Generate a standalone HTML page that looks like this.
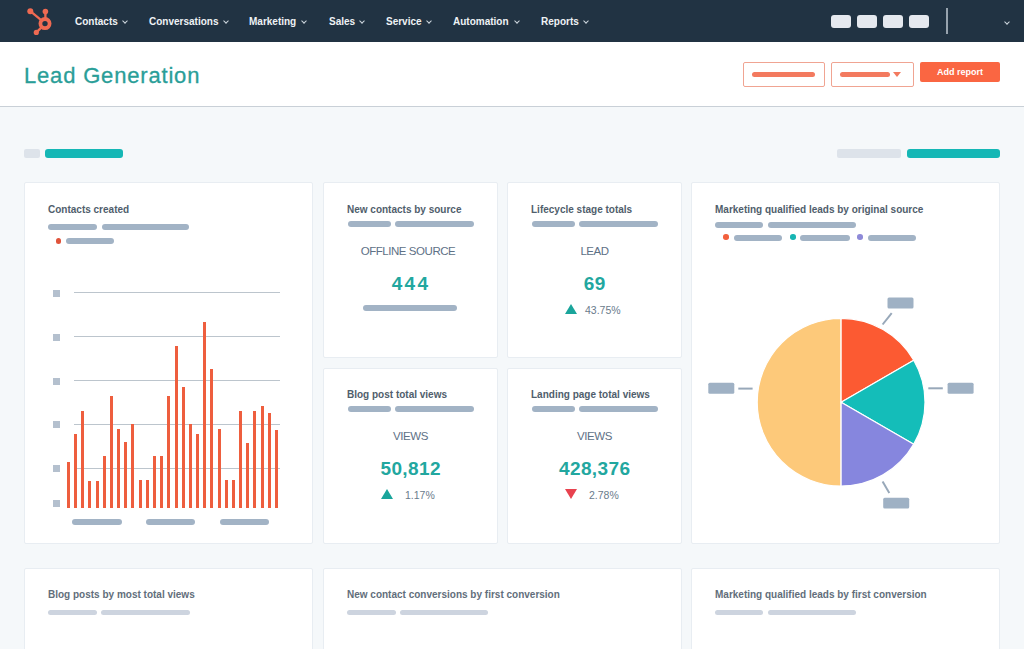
<!DOCTYPE html>
<html><head><meta charset="utf-8">
<style>
*{margin:0;padding:0;box-sizing:border-box}
html,body{width:1024px;height:649px;overflow:hidden;background:#f5f8fa;font-family:"Liberation Sans",sans-serif;position:relative}
.a{position:absolute}
#nav{left:0;top:0;width:1024px;height:42px;background:#213343}
.ni{position:absolute;top:15.7px;font-size:10px;font-weight:bold;color:#eef2f5;line-height:12px;white-space:nowrap}
.chev{position:absolute;width:4px;height:4px;border-right:1.2px solid #cfd8e0;border-bottom:1.2px solid #cfd8e0;transform:rotate(45deg)}
.sq{position:absolute;top:15px;width:19.5px;height:12.5px;background:#e5e9ef;border-radius:3px}
#hdr{left:0;top:42px;width:1024px;height:65px;background:#fff;border-bottom:1px solid #c9d0d7}
#title{left:24px;top:63px;font-size:22px;color:#2a9e98;letter-spacing:0.82px;-webkit-text-stroke:0.3px #2a9e98;line-height:26px;white-space:nowrap}
.btno{position:absolute;top:62px;height:24.5px;border:1.6px solid #f0a492;border-radius:2px;background:#fff}
.bp{position:absolute;height:5px;background:#f37a5f;border-radius:3px}
.card{position:absolute;background:#fff;border:1px solid #e8edf2;border-radius:2px}
.ct{position:absolute;font-size:10px;font-weight:bold;color:#505e6c;line-height:13.4px;white-space:nowrap}
.pl{position:absolute;height:5.5px;background:#a2b3c5;border-radius:3px}
.lab{position:absolute;font-size:11.5px;letter-spacing:-0.45px;color:#5e7186;line-height:14px;white-space:nowrap;text-align:center}
.num{position:absolute;font-size:19px;letter-spacing:0.4px;text-indent:0.4px;font-weight:bold;color:#22a79f;line-height:22px;white-space:nowrap;text-align:center}
.pct{position:absolute;font-size:10.5px;color:#6a7b8c;line-height:12px;white-space:nowrap}
.grid{position:absolute;left:74px;width:206px;height:1px;background:#bcc5cd}
.ys{position:absolute;left:53px;width:7px;height:7px;background:#b4c0ce}
.bar{position:absolute;width:3px;background:#ee5e3e;bottom:141px}
.r3{color:#626e7b}
.r3p{background:#cdd4df}
</style></head><body>
<div id="nav" class="a">
  <svg class="a" style="left:26px;top:6px" width="34" height="30" viewBox="26 6 34 30">
    <g fill="none" stroke="#ef6a52">
      <circle cx="45" cy="23.6" r="4.6" stroke-width="3.8"/>
      <line x1="30.3" y1="11.2" x2="41.5" y2="20.3" stroke-width="2.3"/>
      <line x1="45.4" y1="12" x2="45.4" y2="19" stroke-width="2.3"/>
      <line x1="36.3" y1="32.3" x2="41.5" y2="27.3" stroke-width="2.3"/>
    </g>
    <g fill="#ef6a52">
      <circle cx="30.3" cy="11.2" r="3"/>
      <circle cx="45.4" cy="11.6" r="2.8"/>
      <circle cx="36.3" cy="32.4" r="2.6"/>
    </g>
  </svg>
  <div class="ni" style="left:75px">Contacts</div><div class="chev" style="left:123px;top:19.3px"></div>
  <div class="ni" style="left:149px">Conversations</div><div class="chev" style="left:223.5px;top:19.3px"></div>
  <div class="ni" style="left:249px">Marketing</div><div class="chev" style="left:302px;top:19.3px"></div>
  <div class="ni" style="left:329px">Sales</div><div class="chev" style="left:360px;top:19.3px"></div>
  <div class="ni" style="left:386px">Service</div><div class="chev" style="left:427px;top:19.3px"></div>
  <div class="ni" style="left:453px">Automation</div><div class="chev" style="left:515px;top:19.3px"></div>
  <div class="ni" style="left:541px">Reports</div><div class="chev" style="left:584px;top:19.3px"></div>
  <div class="sq" style="left:831px"></div>
  <div class="sq" style="left:857px"></div>
  <div class="sq" style="left:883px"></div>
  <div class="sq" style="left:909px"></div>
  <div class="a" style="left:946px;top:8px;width:1.5px;height:26px;background:#97a3ae"></div>
  <div class="chev" style="left:1004.5px;top:19.6px"></div>
</div>
<div id="hdr" class="a"></div>
<div id="title" class="a">Lead Generation</div>
<div class="btno" style="left:743px;width:82px"><div class="bp" style="left:8px;top:8.6px;width:63px"></div></div>
<div class="btno" style="left:831px;width:83px"><div class="bp" style="left:8px;top:8.6px;width:50px"></div>
  <div class="a" style="left:60.5px;top:8.6px;width:0;height:0;border-left:4.5px solid transparent;border-right:4.5px solid transparent;border-top:5px solid #f37a5f"></div></div>
<div class="a" style="left:920px;top:62px;width:80px;height:20px;background:#fa6642;border-radius:2px;color:#fff;font-size:9px;font-weight:bold;line-height:21px;text-align:center">Add report</div>

<!-- pill row -->
<div class="a" style="left:24px;top:149px;width:16px;height:9px;background:#dde3ea;border-radius:2px"></div>
<div class="a" style="left:45px;top:149px;width:78px;height:9px;background:#15b7b5;border-radius:3px"></div>
<div class="a" style="left:837px;top:149px;width:64px;height:9px;background:#dde3ea;border-radius:2px"></div>
<div class="a" style="left:907px;top:149px;width:93px;height:9px;background:#15b7b5;border-radius:3px"></div>

<!-- card 1 -->
<div class="card" style="left:24px;top:182px;width:289px;height:362px"></div>
<div class="ct" style="left:48px;top:203px">Contacts created</div>
<div class="pl" style="left:48px;top:224px;width:49px"></div>
<div class="pl" style="left:102px;top:224px;width:87px"></div>
<div class="a" style="left:55.5px;top:238px;width:5.5px;height:5.5px;border-radius:50%;background:#e0533a"></div>
<div class="pl" style="left:66px;top:238px;width:48px"></div>
<div class="grid" style="top:292px"></div>
<div class="grid" style="top:336px"></div>
<div class="grid" style="top:380px"></div>
<div class="grid" style="top:424px"></div>
<div class="grid" style="top:468px"></div>
<div class="ys" style="top:290px"></div>
<div class="ys" style="top:334px"></div>
<div class="ys" style="top:378px"></div>
<div class="ys" style="top:421px"></div>
<div class="ys" style="top:465px"></div>
<div class="ys" style="top:500px"></div>
<div class="a" style="left:66.80px;top:461.50px;width:3px;height:46.20px;background:#ee5e3e"></div>
<div class="a" style="left:73.98px;top:433.90px;width:3px;height:73.80px;background:#ee5e3e"></div>
<div class="a" style="left:81.16px;top:410.50px;width:3px;height:97.20px;background:#ee5e3e"></div>
<div class="a" style="left:88.34px;top:480.50px;width:3px;height:27.20px;background:#ee5e3e"></div>
<div class="a" style="left:95.52px;top:480.50px;width:3px;height:27.20px;background:#ee5e3e"></div>
<div class="a" style="left:102.70px;top:456.30px;width:3px;height:51.40px;background:#ee5e3e"></div>
<div class="a" style="left:109.88px;top:396.00px;width:3px;height:111.70px;background:#ee5e3e"></div>
<div class="a" style="left:117.06px;top:429.00px;width:3px;height:78.70px;background:#ee5e3e"></div>
<div class="a" style="left:124.24px;top:442.30px;width:3px;height:65.40px;background:#ee5e3e"></div>
<div class="a" style="left:131.42px;top:424.00px;width:3px;height:83.70px;background:#ee5e3e"></div>
<div class="a" style="left:138.60px;top:480.00px;width:3px;height:27.70px;background:#ee5e3e"></div>
<div class="a" style="left:145.78px;top:480.00px;width:3px;height:27.70px;background:#ee5e3e"></div>
<div class="a" style="left:152.96px;top:456.30px;width:3px;height:51.40px;background:#ee5e3e"></div>
<div class="a" style="left:160.14px;top:456.30px;width:3px;height:51.40px;background:#ee5e3e"></div>
<div class="a" style="left:167.32px;top:396.00px;width:3px;height:111.70px;background:#ee5e3e"></div>
<div class="a" style="left:174.50px;top:345.60px;width:3px;height:162.10px;background:#ee5e3e"></div>
<div class="a" style="left:181.68px;top:386.50px;width:3px;height:121.20px;background:#ee5e3e"></div>
<div class="a" style="left:188.86px;top:424.20px;width:3px;height:83.50px;background:#ee5e3e"></div>
<div class="a" style="left:196.04px;top:433.70px;width:3px;height:74.00px;background:#ee5e3e"></div>
<div class="a" style="left:203.22px;top:322.20px;width:3px;height:185.50px;background:#ee5e3e"></div>
<div class="a" style="left:210.40px;top:368.50px;width:3px;height:139.20px;background:#ee5e3e"></div>
<div class="a" style="left:217.58px;top:429.00px;width:3px;height:78.70px;background:#ee5e3e"></div>
<div class="a" style="left:224.76px;top:480.00px;width:3px;height:27.70px;background:#ee5e3e"></div>
<div class="a" style="left:231.94px;top:480.00px;width:3px;height:27.70px;background:#ee5e3e"></div>
<div class="a" style="left:239.12px;top:410.80px;width:3px;height:96.90px;background:#ee5e3e"></div>
<div class="a" style="left:246.30px;top:442.50px;width:3px;height:65.20px;background:#ee5e3e"></div>
<div class="a" style="left:253.48px;top:411.00px;width:3px;height:96.70px;background:#ee5e3e"></div>
<div class="a" style="left:260.66px;top:405.80px;width:3px;height:101.90px;background:#ee5e3e"></div>
<div class="a" style="left:267.84px;top:413.00px;width:3px;height:94.70px;background:#ee5e3e"></div>
<div class="a" style="left:275.02px;top:430.00px;width:3px;height:77.70px;background:#ee5e3e"></div>

<div class="pl" style="left:72px;top:519px;width:50px"></div>
<div class="pl" style="left:146px;top:519px;width:49px"></div>
<div class="pl" style="left:220px;top:519px;width:49px"></div>

<!-- card 2 -->
<div class="card" style="left:323px;top:182px;width:175px;height:176px"></div>
<div class="ct" style="left:347px;top:203px">New contacts by source</div>
<div class="pl" style="left:348px;top:221px;width:43px"></div>
<div class="pl" style="left:395px;top:221px;width:79px"></div>
<div class="lab" style="left:320.5px;width:175px;top:244px">OFFLINE SOURCE</div>
<div class="num" style="left:323px;width:175px;top:273.4px;letter-spacing:2.2px;text-indent:1px">444</div>
<div class="pl" style="left:363px;top:305px;width:94px"></div>

<!-- card 3 -->
<div class="card" style="left:507px;top:182px;width:175px;height:176px"></div>
<div class="ct" style="left:531px;top:203px">Lifecycle stage totals</div>
<div class="pl" style="left:532px;top:221px;width:43px"></div>
<div class="pl" style="left:579px;top:221px;width:79px"></div>
<div class="lab" style="left:507px;width:175px;top:244px">LEAD</div>
<div class="num" style="left:507px;width:175px;top:273.4px">69</div>
<div class="a" style="left:564.8px;top:304.3px;width:0;height:0;border-left:6.8px solid transparent;border-right:6.8px solid transparent;border-bottom:10.3px solid #1aa59b"></div>
<div class="pct" style="left:585px;top:304px">43.75%</div>

<!-- card 2b -->
<div class="card" style="left:323px;top:368px;width:175px;height:176px"></div>
<div class="ct" style="left:347px;top:388px">Blog post total views</div>
<div class="pl" style="left:348px;top:406px;width:43px"></div>
<div class="pl" style="left:395px;top:406px;width:79px"></div>
<div class="lab" style="left:323px;width:175px;top:429px">VIEWS</div>
<div class="num" style="left:323px;width:175px;top:458.4px">50,812</div>
<div class="a" style="left:380.8px;top:489.4px;width:0;height:0;border-left:6.8px solid transparent;border-right:6.8px solid transparent;border-bottom:10.3px solid #1aa59b"></div>
<div class="pct" style="left:405px;top:489px">1.17%</div>

<!-- card 3b -->
<div class="card" style="left:507px;top:368px;width:175px;height:176px"></div>
<div class="ct" style="left:531px;top:388px">Landing page total views</div>
<div class="pl" style="left:532px;top:406px;width:43px"></div>
<div class="pl" style="left:579px;top:406px;width:79px"></div>
<div class="lab" style="left:507px;width:175px;top:429px">VIEWS</div>
<div class="num" style="left:507px;width:175px;top:458.4px">428,376</div>
<div class="a" style="left:564.8px;top:489.2px;width:0;height:0;border-left:6.8px solid transparent;border-right:6.8px solid transparent;border-top:10.2px solid #e8424f"></div>
<div class="pct" style="left:589px;top:489px">2.78%</div>

<!-- card 4 -->
<div class="card" style="left:691px;top:182px;width:309px;height:362px"></div>
<div class="ct" style="left:715px;top:203px">Marketing qualified leads by original source</div>
<div class="pl" style="left:715px;top:222px;width:48px"></div>
<div class="pl" style="left:768px;top:222px;width:88px"></div>
<div class="a" style="left:723.2px;top:234.4px;width:5.6px;height:5.6px;border-radius:50%;background:#f2603d"></div>
<div class="pl" style="left:734px;top:235px;width:48px"></div>
<div class="a" style="left:790.2px;top:234.4px;width:5.6px;height:5.6px;border-radius:50%;background:#17b5b3"></div>
<div class="pl" style="left:800px;top:235px;width:50px"></div>
<div class="a" style="left:857.2px;top:234.4px;width:5.6px;height:5.6px;border-radius:50%;background:#8e8ad8"></div>
<div class="pl" style="left:868px;top:235px;width:48px"></div>
<svg class="a" style="left:691px;top:182px" width="310" height="362" viewBox="691 182 310 362">
  <g stroke="#fff" stroke-width="1.2" stroke-linejoin="round">
    <path d="M841.10 402.20 L841.10 486.10 A83.9 83.9 0 0 1 757.20 402.20 A83.9 83.9 0 0 1 841.10 318.30 Z" fill="#fdc97a"/>
    <path d="M841.10 402.20 L841.10 318.30 A83.9 83.9 0 0 1 913.76 360.25 Z" fill="#fc5a32"/>
    <path d="M841.10 402.20 L913.76 360.25 A83.9 83.9 0 0 1 913.76 444.15 Z" fill="#14bdb9"/>
    <path d="M841.10 402.20 L913.76 444.15 A83.9 83.9 0 0 1 841.10 486.10 Z" fill="#8686de"/>
  </g>
  <g stroke="#98a8b9" stroke-width="2">
    <line x1="882.6" y1="324.5" x2="891.7" y2="313.1"/>
    <line x1="928.3" y1="388.3" x2="942.8" y2="388.3"/>
    <line x1="738.3" y1="388.6" x2="752.6" y2="388.6"/>
    <line x1="882.6" y1="481.5" x2="889.3" y2="492.9"/>
  </g>
  <g fill="#9fb1c4">
    <rect x="887.5" y="297.5" width="26" height="11" rx="1.5"/>
    <rect x="947.6" y="382.7" width="26" height="11" rx="1.5"/>
    <rect x="708.3" y="382.7" width="26" height="11" rx="1.5"/>
    <rect x="883.2" y="497.7" width="26" height="10.8" rx="1.5"/>
  </g>
</svg>

<!-- row 3 -->
<div class="card" style="left:24px;top:568px;width:289px;height:100px"></div>
<div class="ct r3" style="left:48px;top:588px">Blog posts by most total views</div>
<div class="pl r3p" style="left:48px;top:609.5px;width:49px"></div>
<div class="pl r3p" style="left:101px;top:609.5px;width:89px"></div>
<div class="card" style="left:323px;top:568px;width:359px;height:100px"></div>
<div class="ct r3" style="left:347px;top:588px">New contact conversions by first conversion</div>
<div class="pl r3p" style="left:347px;top:609.5px;width:49px"></div>
<div class="pl r3p" style="left:400px;top:609.5px;width:88px"></div>
<div class="card" style="left:691px;top:568px;width:309px;height:100px"></div>
<div class="ct r3" style="left:715px;top:588px">Marketing qualified leads by first conversion</div>
<div class="pl r3p" style="left:715px;top:609.5px;width:48px"></div>
<div class="pl r3p" style="left:768px;top:609.5px;width:88px"></div>
</body></html>
